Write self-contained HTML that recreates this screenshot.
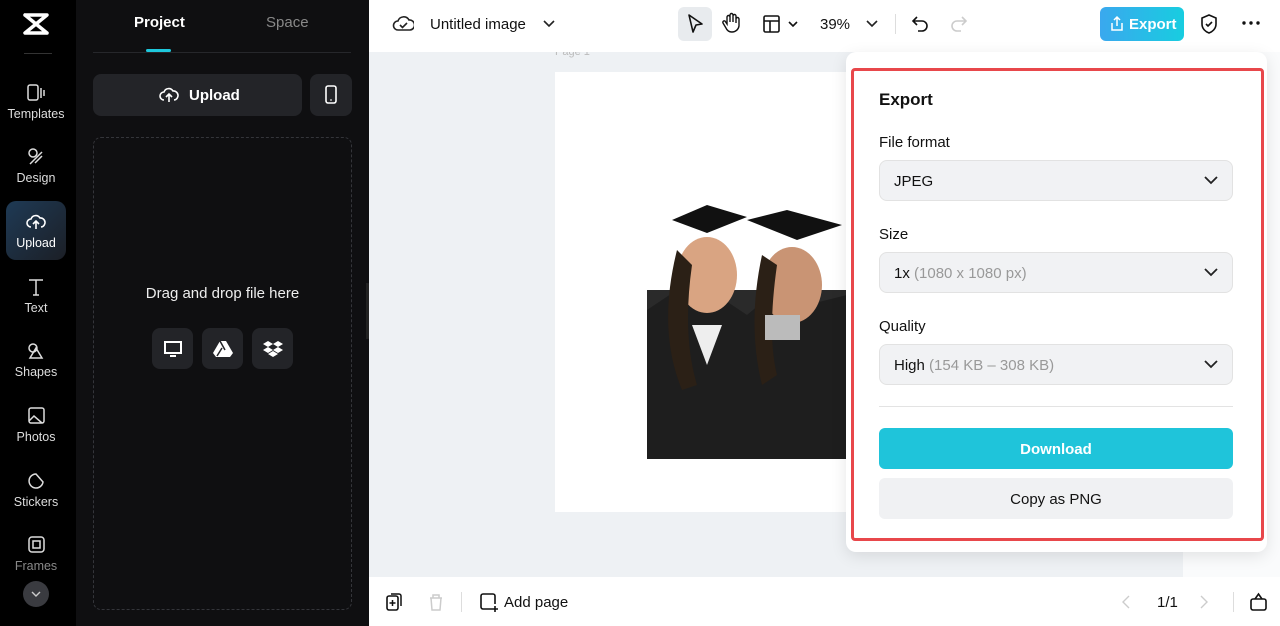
<!DOCTYPE html>
<html><head><style>
*{box-sizing:border-box;margin:0;padding:0}
body{width:1280px;height:626px;overflow:hidden;font-family:"Liberation Sans",sans-serif;position:relative;background:#fff}
.a{position:absolute}
.nav{left:0;top:0;width:76px;height:626px;background:#000}
.ni{position:absolute;left:0;width:72px;text-align:center;color:#ddd;font-size:12.5px}
.ni svg{display:block;margin:0 auto 4px}
.panel{left:76px;top:0;width:293px;height:626px;background:#0f0f11}
.sel{border:1px solid #e2e2e2;border-radius:8px;background:#f1f2f4;height:41px;position:absolute;left:879px;width:354px;font-size:15px;color:#111;padding:12px 14px}
.sel span{color:#999}
.sel svg{position:absolute;right:14px;top:14px}
.lbl{position:absolute;left:879px;font-size:15px;color:#111}
</style></head><body>
<div class="a nav"></div>
<svg class="a" style="left:22px;top:12px" width="28" height="24" viewBox="0 0 28 24"><path d="M3 3h22L3 21h22M3 3l22 18" stroke="#fff" stroke-width="3.5" fill="none" stroke-linejoin="round" stroke-linecap="round"/></svg>
<div class="a" style="left:24px;top:53px;width:28px;height:1px;background:#333"></div>
<div class="ni" style="top:83px"><svg width="20" height="20"><rect x="2" y="2" width="10" height="15" rx="2" stroke="#ddd" fill="none" stroke-width="1.5"/><path d="M15 5v10M18 7v6" stroke="#ddd" stroke-width="1.5"/></svg>Templates</div>
<div class="ni" style="top:147px"><svg width="20" height="20"><circle cx="7" cy="6" r="4" stroke="#ddd" fill="none" stroke-width="1.5"/><path d="M4 17l12-12M9 16l7-7" stroke="#ddd" stroke-width="1.5"/></svg>Design</div>
<div class="a" style="left:6px;top:201px;width:60px;height:59px;border-radius:10px;background:linear-gradient(135deg,#1e3a55,#1c1f26)"></div>
<div class="ni" style="top:212px;color:#fff"><svg width="20" height="20"><path d="M5 15a4 4 0 010-8 5 5 0 019-1 4 4 0 011 9M10 17V10M7 12l3-3 3 3" stroke="#fff" fill="none" stroke-width="1.6"/></svg>Upload</div>
<div class="ni" style="top:277px"><svg width="20" height="20"><path d="M3 3h14M10 3v15M7 18h6" stroke="#ddd" stroke-width="1.5"/></svg>Text</div>
<div class="ni" style="top:341px"><svg width="20" height="20"><path d="M10 7l6 10H4z" stroke="#ddd" fill="none" stroke-width="1.5"/><circle cx="7" cy="7" r="4" stroke="#ddd" fill="none" stroke-width="1.5"/></svg>Shapes</div>
<div class="ni" style="top:406px"><svg width="20" height="20"><rect x="3" y="2" width="15" height="15" rx="2" stroke="#ddd" fill="none" stroke-width="1.5"/><path d="M3 15l5-5 8 7" stroke="#ddd" fill="none" stroke-width="1.5"/></svg>Photos</div>
<div class="ni" style="top:471px"><svg width="20" height="20"><path d="M17 11A7 7 0 1110 3z" stroke="#ddd" fill="none" stroke-width="1.5"/></svg>Stickers</div>
<div class="ni" style="top:535px;color:#888"><svg width="20" height="20"><rect x="3" y="2" width="15" height="15" rx="3" stroke="#ddd" fill="none" stroke-width="1.5"/><rect x="7" y="6" width="7" height="7" stroke="#ddd" fill="none" stroke-width="1.5"/></svg>Frames</div>
<div class="a" style="left:23px;top:581px;width:26px;height:26px;border-radius:50%;background:#3a3b40"></div>
<svg class="a" style="left:30px;top:590px" width="12" height="8"><path d="M2 2l4 4 4-4" stroke="#ccc" fill="none" stroke-width="1.4"/></svg>

<div class="a panel"></div>
<div class="a" style="left:134px;top:14px;color:#fff;font-weight:bold;font-size:15px">Project</div>
<div class="a" style="left:266px;top:14px;color:#888;font-size:15px">Space</div>
<div class="a" style="left:93px;top:52px;width:258px;height:1px;background:#26272b"></div>
<div class="a" style="left:146px;top:49px;width:25px;height:3px;border-radius:2px;background:#1ec8dc"></div>
<div class="a" style="left:93px;top:74px;width:209px;height:42px;border-radius:8px;background:#232428;color:#fff;font-size:15px;font-weight:bold;padding:13px 0 0 96px">Upload</div>
<svg class="a" style="left:159px;top:85px" width="20" height="18"><path d="M5 15a4 4 0 010-8 5 5 0 019-1 4 4 0 011 9M10 17V10M7 12l3-3 3 3" stroke="#fff" fill="none" stroke-width="1.6"/></svg>
<div class="a" style="left:310px;top:74px;width:42px;height:42px;border-radius:8px;background:#232428"></div>
<svg class="a" style="left:324px;top:85px" width="14" height="20"><rect x="2" y="1" width="10" height="17" rx="2" stroke="#fff" fill="none" stroke-width="1.6"/><path d="M6 15h2" stroke="#fff"/></svg>
<div class="a" style="left:93px;top:137px;width:259px;height:473px;border:1px dashed #34353a;border-radius:8px"></div>
<div class="a" style="left:93px;top:285px;width:259px;text-align:center;color:#eee;font-size:15px">Drag and drop file here</div>
<div class="a" style="left:152px;top:328px;width:41px;height:41px;border-radius:8px;background:#232428"></div>
<div class="a" style="left:202px;top:328px;width:41px;height:41px;border-radius:8px;background:#232428"></div>
<div class="a" style="left:252px;top:328px;width:41px;height:41px;border-radius:8px;background:#232428"></div>
<svg class="a" style="left:163px;top:340px" width="20" height="18"><rect x="2" y="2" width="16" height="11" stroke="#fff" fill="none" stroke-width="2"/><path d="M7 16h6" stroke="#fff" stroke-width="2"/></svg>
<svg class="a" style="left:213px;top:340px" width="20" height="17"><path d="M7 1h6l7 12-3 4H3L0 13z" fill="#fff"/><path d="M7 1l5 9M4 16l5-8" stroke="#232428" stroke-width="1.5"/></svg>
<svg class="a" style="left:263px;top:340px" width="20" height="18"><path d="M5 1l5 3-5 3-5-3zM15 1l5 3-5 3-5-3zM5 7l5 3-5 3-5-3zM15 7l5 3-5 3-5-3zM5 14l5-3 5 3-5 3z" fill="#fff"/></svg>
<div class="a" style="left:366px;top:283px;width:9px;height:56px;border-radius:0 8px 8px 0;background:#222"></div>

<!-- canvas -->
<div class="a" style="left:369px;top:52px;width:911px;height:525px;background:#eef1f4"></div>
<div class="a" style="left:1183px;top:52px;width:97px;height:525px;background:#fafbfc"></div>
<div class="a" style="left:555px;top:46px;color:#bbb;font-size:11px">Page 1</div>
<div class="a" style="left:555px;top:72px;width:300px;height:440px;background:#fff"></div>
<svg class="a" style="left:647px;top:200px" width="200" height="259" viewBox="0 0 200 259">
<rect x="0" y="90" width="200" height="169" fill="#2a2a2a"/>
<path d="M0 110l30-20 20 20 20-15 30 20 30-25 30 15 40-10v164H0z" fill="#1e1e1e"/>
<ellipse cx="60" cy="75" rx="30" ry="38" fill="#d9a482"/>
<ellipse cx="145" cy="85" rx="30" ry="38" fill="#c99474"/>
<path d="M25 20l35-15 40 12-40 16z" fill="#111"/>
<path d="M100 20l40-10 55 15-45 15z" fill="#111"/>
<path d="M30 50q-20 80 5 140l15-5q-15-50 -5-120z M115 55q-15 70 0 130l15-10q-10-40 0-110z" fill="#2b2016"/>
<rect x="118" y="115" width="35" height="25" fill="#bbb"/>
<path d="M45 125l30 0-15 40z" fill="#eee"/>
</svg>

<!-- top bar -->
<div class="a" style="left:369px;top:0;width:911px;height:52px;background:#fff"></div>
<svg class="a" style="left:392px;top:14px" width="22" height="20"><path d="M6 16a4.5 4.5 0 010-9 6 6 0 0111-1 4.5 4.5 0 011 10z" stroke="#222" fill="none" stroke-width="1.6"/><path d="M8 11l2.5 2.5L15 9" stroke="#222" fill="none" stroke-width="1.6"/></svg>
<div class="a" style="left:430px;top:16px;font-size:15px;color:#111">Untitled image</div>
<svg class="a" style="left:543px;top:20px" width="12" height="8"><path d="M1 1l5 5 5-5" stroke="#222" fill="none" stroke-width="1.6"/></svg>
<div class="a" style="left:678px;top:7px;width:34px;height:34px;border-radius:6px;background:#e8ebee"></div>
<svg class="a" style="left:687px;top:13px" width="18" height="22"><path d="M2 2l13 9-6 1-3 7z" stroke="#111" fill="none" stroke-width="1.6" stroke-linejoin="round"/></svg>
<svg class="a" style="left:722px;top:12px" width="20" height="22"><path d="M5 12V5a1.5 1.5 0 013 0v5V3a1.5 1.5 0 013 0v7V4a1.5 1.5 0 013 0v7V7a1.5 1.5 0 013 0v7a7 7 0 01-7 6 6 6 0 01-6-4l-3-5a1.5 1.5 0 012-2z" stroke="#111" fill="none" stroke-width="1.4"/></svg>
<svg class="a" style="left:762px;top:14px" width="38" height="20"><rect x="2" y="2" width="15" height="16" rx="1.5" stroke="#111" fill="none" stroke-width="1.6"/><path d="M2 7h15M8 7v11M27 8l4 4 4-4" stroke="#111" fill="none" stroke-width="1.6"/></svg>
<div class="a" style="left:820px;top:16px;font-size:15px;color:#111">39%</div>
<svg class="a" style="left:866px;top:20px" width="12" height="8"><path d="M1 1l5 5 5-5" stroke="#222" fill="none" stroke-width="1.6"/></svg>
<div class="a" style="left:895px;top:14px;width:1px;height:20px;background:#ddd"></div>
<svg class="a" style="left:911px;top:14px" width="20" height="20"><path d="M6 3L2 7l4 4M2 7h9a5 5 0 010 10H7" stroke="#111" fill="none" stroke-width="1.6"/></svg>
<svg class="a" style="left:948px;top:14px" width="20" height="20"><path d="M14 3l4 4-4 4M18 7H9a5 5 0 000 10h4" stroke="#ccc" fill="none" stroke-width="1.6"/></svg>
<div class="a" style="left:1100px;top:7px;width:84px;height:34px;border-radius:6px;background:linear-gradient(90deg,#3aa8ee,#18cde0);color:#fff;font-size:15px;font-weight:bold;padding:9px 0 0 29px;white-space:nowrap">Export</div>
<svg class="a" style="left:1109px;top:15px" width="16" height="18"><path d="M5 5l3-3 3 3M8 2v9M3 8v7h10V8" stroke="#fff" fill="none" stroke-width="1.5"/></svg>
<svg class="a" style="left:1199px;top:13px" width="20" height="22"><path d="M10 2l7 3v6c0 5-4 8-7 9-3-1-7-4-7-9V5z" stroke="#111" fill="none" stroke-width="1.6"/><path d="M7 11l2 2 4-4" stroke="#111" fill="none" stroke-width="1.6"/></svg>
<svg class="a" style="left:1241px;top:20px" width="20" height="6"><circle cx="3" cy="3" r="1.7" fill="#111"/><circle cx="10" cy="3" r="1.7" fill="#111"/><circle cx="17" cy="3" r="1.7" fill="#111"/></svg>

<!-- bottom -->
<div class="a" style="left:369px;top:577px;width:911px;height:49px;background:#fff"></div>
<svg class="a" style="left:385px;top:592px" width="18" height="20"><rect x="2" y="4" width="11" height="14" rx="2" stroke="#111" fill="none" stroke-width="1.6"/><path d="M6 2h8a2 2 0 012 2v10M7.5 8v6M4.5 11h6" stroke="#111" fill="none" stroke-width="1.5"/></svg>
<svg class="a" style="left:427px;top:592px" width="18" height="20"><path d="M3 6h12M6 6V3h6v3M4 6l1 12h8l1-12" stroke="#ccc" fill="none" stroke-width="1.5"/></svg>
<div class="a" style="left:461px;top:592px;width:1px;height:20px;background:#ddd"></div>
<svg class="a" style="left:479px;top:592px" width="20" height="20"><path d="M13 17H4a2 2 0 01-2-2V4a2 2 0 012-2h10a2 2 0 012 2v8M16 14v6M13 17h6" stroke="#111" fill="none" stroke-width="1.6"/></svg>
<div class="a" style="left:504px;top:594px;font-size:15px;color:#111">Add page</div>
<svg class="a" style="left:1120px;top:594px" width="12" height="16"><path d="M9 2L3 8l6 6" stroke="#ccc" fill="none" stroke-width="1.4"/></svg>
<div class="a" style="left:1157px;top:594px;font-size:15px;color:#111">1/1</div>
<svg class="a" style="left:1198px;top:594px" width="12" height="16"><path d="M3 2l6 6-6 6" stroke="#ccc" fill="none" stroke-width="1.4"/></svg>
<div class="a" style="left:1233px;top:592px;width:1px;height:20px;background:#ddd"></div>
<svg class="a" style="left:1249px;top:591px" width="20" height="22"><rect x="2" y="8" width="15" height="11" rx="2" stroke="#111" fill="none" stroke-width="1.6"/><path d="M6 8l3.5-5 3.5 5" stroke="#111" fill="none" stroke-width="1.6"/></svg>

<!-- popup -->
<div class="a" style="left:846px;top:52px;width:421px;height:500px;background:#fff;border-radius:10px;box-shadow:0 4px 16px rgba(0,0,0,.1)"></div>
<div class="a" style="left:851px;top:68px;width:413px;height:473px;border:3px solid #e8474b;border-radius:4px"></div>
<div class="a" style="left:879px;top:90px;font-size:17px;font-weight:bold;color:#111">Export</div>
<div class="lbl" style="top:134px">File format</div>
<div class="sel" style="top:160px">JPEG<svg width="14" height="10"><path d="M1 2l6 6 6-6" stroke="#222" fill="none" stroke-width="1.8"/></svg></div>
<div class="lbl" style="top:226px">Size</div>
<div class="sel" style="top:252px">1x <span>(1080 x 1080 px)</span><svg width="14" height="10"><path d="M1 2l6 6 6-6" stroke="#222" fill="none" stroke-width="1.8"/></svg></div>
<div class="lbl" style="top:318px">Quality</div>
<div class="sel" style="top:344px">High <span>(154 KB – 308 KB)</span><svg width="14" height="10"><path d="M1 2l6 6 6-6" stroke="#222" fill="none" stroke-width="1.8"/></svg></div>
<div class="a" style="left:879px;top:406px;width:354px;height:1px;background:#e3e3e3"></div>
<div class="a" style="left:879px;top:428px;width:354px;height:41px;border-radius:6px;background:#1fc4da;color:#fff;font-size:15px;font-weight:bold;text-align:center;padding-top:13px">Download</div>
<div class="a" style="left:879px;top:478px;width:354px;height:41px;border-radius:6px;background:#f0f1f3;color:#111;font-size:15px;text-align:center;padding-top:13px">Copy as PNG</div>
</body></html>
